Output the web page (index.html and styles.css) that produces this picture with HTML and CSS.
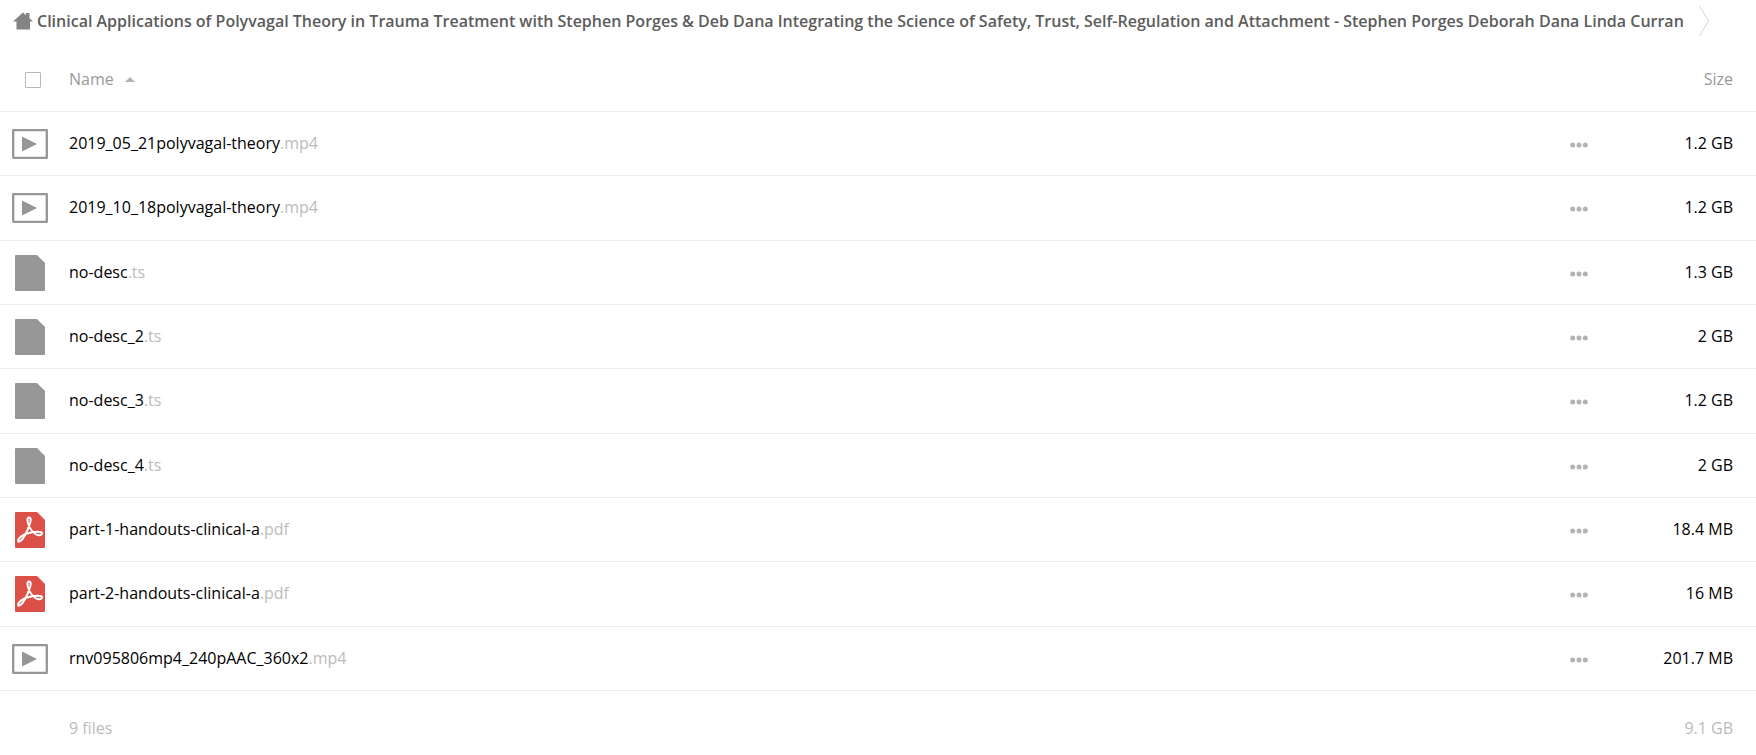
FILE: index.html
```html
<!DOCTYPE html>
<html lang="en">
<head>
<meta charset="utf-8">
<title>Files</title>
<link rel="stylesheet" href="styles.css">
</head>
<body>
<svg class="sprite" aria-hidden="true">
  <symbol id="video" viewBox="0 0 36 30">
    <path d="M1.200 1.200h33.600v27.600H1.200z" fill="#fff" stroke="#969696" stroke-width="2.300" stroke-linejoin="round"/>
    <path d="M10 7.500l15 7.500-15 7.500z" fill="#969696"/>
  </symbol>
  <symbol id="file" viewBox="0 0 30 36">
    <path d="M1 0h21l8 8v27a1 1 0 0 1-1 1H1a1 1 0 0 1-1-1V1a1 1 0 0 1 1-1z" fill="#969696"/>
  </symbol>
  <symbol id="pdf" viewBox="0 0 30 36">
    <path d="M1 0h21l8 8v27a1 1 0 0 1-1 1H1a1 1 0 0 1-1-1V1a1 1 0 0 1 1-1z" fill="#dd5047"/>
    <path d="M14 5.500C12 5.500 12 9 13.600 13C15.200 17 18 20.500 21 22.300C24 24 27.300 23 27 21C26.600 19.300 20 19.500 16 20.500C11 21.600 6 24 4 26.500C2.500 28.500 3 30 4.500 29.600C7.500 28.500 10.500 22.500 12.500 18C14.200 14 15.700 10.500 15.700 8C15.700 6.300 15 5.500 14 5.500z" fill="none" stroke="#fff" stroke-width="2" stroke-linejoin="round"/>
  </symbol>
  <symbol id="dots" viewBox="0 0 18 6">
    <circle cx="2.700" cy="3" r="2.500"/><circle cx="9" cy="3" r="2.500"/><circle cx="15.300" cy="3" r="2.500"/>
  </symbol>
</svg>

<nav class="breadcrumb" aria-label="Breadcrumb">
  <a class="crumb" href="#">
    <svg class="home" viewBox="0 0 20 18" aria-hidden="true"><path d="M10 0.500l3 2.700V1h3.500v5.200L20 9.500h-3V17.500H3.500V9.500H0z" fill="#848484"/></svg>
    <span>Clinical Applications of Polyvagal Theory in Trauma Treatment with Stephen Porges &amp; Deb Dana Integrating the Science of Safety, Trust, Self-Regulation and Attachment - Stephen Porges Deborah Dana Linda Curran</span>
  </a>
  <svg class="separator" viewBox="0 0 10 30" aria-hidden="true"><path d="M0.500 0l9 15-9 15" fill="none" stroke="#d5d5d5"/></svg>
</nav>

<table class="files">
  <thead>
    <tr>
      <th class="select"><input class="check" type="checkbox" aria-label="Select all"></th>
      <th class="name"><button class="sort" type="button">Name <svg class="arrow" viewBox="0 0 10 5" aria-hidden="true"><path d="M0 5l5-5 5 5z" fill="#b3b3b3"/></svg></button></th>
      <th class="actions"></th>
      <th class="size"><button class="sort" type="button">Size</button></th>
    </tr>
  </thead>
  <tbody>
    <tr><td class="select"><svg class="icon-video"><use href="#video"/></svg></td><td class="name"><a href="#">2019_05_21polyvagal-theory<span class="ext">.mp4</span></a></td><td class="actions"><button class="more" type="button" aria-label="More actions"><svg class="dots"><use href="#dots"/></svg></button></td><td class="size">1.2 GB</td></tr>
    <tr><td class="select"><svg class="icon-video"><use href="#video"/></svg></td><td class="name"><a href="#">2019_10_18polyvagal-theory<span class="ext">.mp4</span></a></td><td class="actions"><button class="more" type="button" aria-label="More actions"><svg class="dots"><use href="#dots"/></svg></button></td><td class="size">1.2 GB</td></tr>
    <tr><td class="select"><svg class="icon-file"><use href="#file"/></svg></td><td class="name"><a href="#">no-desc<span class="ext">.ts</span></a></td><td class="actions"><button class="more" type="button" aria-label="More actions"><svg class="dots"><use href="#dots"/></svg></button></td><td class="size">1.3 GB</td></tr>
    <tr><td class="select"><svg class="icon-file"><use href="#file"/></svg></td><td class="name"><a href="#">no-desc_2<span class="ext">.ts</span></a></td><td class="actions"><button class="more" type="button" aria-label="More actions"><svg class="dots"><use href="#dots"/></svg></button></td><td class="size">2 GB</td></tr>
    <tr><td class="select"><svg class="icon-file"><use href="#file"/></svg></td><td class="name"><a href="#">no-desc_3<span class="ext">.ts</span></a></td><td class="actions"><button class="more" type="button" aria-label="More actions"><svg class="dots"><use href="#dots"/></svg></button></td><td class="size">1.2 GB</td></tr>
    <tr><td class="select"><svg class="icon-file"><use href="#file"/></svg></td><td class="name"><a href="#">no-desc_4<span class="ext">.ts</span></a></td><td class="actions"><button class="more" type="button" aria-label="More actions"><svg class="dots"><use href="#dots"/></svg></button></td><td class="size">2 GB</td></tr>
    <tr><td class="select"><svg class="icon-file"><use href="#pdf"/></svg></td><td class="name"><a href="#">part-1-handouts-clinical-a<span class="ext">.pdf</span></a></td><td class="actions"><button class="more" type="button" aria-label="More actions"><svg class="dots"><use href="#dots"/></svg></button></td><td class="size">18.4 MB</td></tr>
    <tr><td class="select"><svg class="icon-file"><use href="#pdf"/></svg></td><td class="name"><a href="#">part-2-handouts-clinical-a<span class="ext">.pdf</span></a></td><td class="actions"><button class="more" type="button" aria-label="More actions"><svg class="dots"><use href="#dots"/></svg></button></td><td class="size">16 MB</td></tr>
    <tr><td class="select"><svg class="icon-video"><use href="#video"/></svg></td><td class="name"><a href="#">rnv095806mp4_240pAAC_360x2<span class="ext">.mp4</span></a></td><td class="actions"><button class="more" type="button" aria-label="More actions"><svg class="dots"><use href="#dots"/></svg></button></td><td class="size">201.7 MB</td></tr>
  </tbody>
  <tfoot>
    <tr><td class="select"></td><td class="name">9 files</td><td class="actions"></td><td class="size">9.1 GB</td></tr>
  </tfoot>
</table>
</body>
</html>
```

FILE: styles.css
```css
* {
  box-sizing: border-box;
}

body {
  margin: 0;
  background: #fff;
  color: #000;
  font-family: "Open Sans", "Noto Sans", sans-serif;
  font-size: 16px;
  line-height: 22px;
}

a {
  color: inherit;
  text-decoration: none;
}

button {
  padding: 0;
  border: 0;
  background: none;
  color: inherit;
  font: inherit;
  cursor: pointer;
}

.sprite {
  position: absolute;
  width: 0;
  height: 0;
}

.breadcrumb {
  display: flex;
  align-items: center;
  gap: 15px;
  height: 42px;
  padding-left: 13px;
  color: #5c5c5c;
  font-weight: 600;
  white-space: nowrap;
}

.crumb {
  display: flex;
  align-items: center;
  gap: 4px;
}

.home {
  width: 20px;
  height: 18px;
}

.separator {
  width: 10px;
  height: 30px;
}

.files {
  width: 100%;
  border-collapse: separate;
  border-spacing: 0;
  table-layout: fixed;
}

.files th,
.files td {
  padding: 0;
  text-align: left;
  font-weight: 400;
  vertical-align: middle;
}

.files thead th {
  height: 70px;
  padding-top: 5px;
  border-bottom: 1px solid #ebebeb;
  color: #999;
}

.files tbody td {
  height: 64px;
  border-bottom: 1px solid #ebebeb;
}

.files tbody tr:nth-child(3n + 2) td {
  height: 65px;
}

.files tbody .name,
.files tbody .size {
  padding-bottom: 2px;
}

.files tfoot td {
  height: 74px;
  color: #bbb;
}

.files .select {
  width: 69px;
}

.files tbody .select {
  padding-left: 12px;
}

.files thead .select {
  padding-left: 25px;
}

.files .actions {
  width: 100px;
}

.files .size {
  width: 95px;
  padding-right: 23px;
  text-align: right;
  white-space: nowrap;
}

.ext {
  color: #bbb;
}

.check {
  display: block;
  width: 16px;
  height: 16px;
  margin: 2px 0 0;
  border: 1px solid #b8b8b8;
  border-radius: 1px;
  appearance: none;
  background: #fff;
}

.arrow {
  width: 10px;
  height: 5px;
  margin-left: 7px;
  vertical-align: 3px;
}

.icon-video {
  display: block;
  width: 36px;
  height: 30px;
}

.icon-file {
  display: block;
  width: 30px;
  height: 36px;
  margin-left: 3px;
}

.more {
  display: block;
  margin-left: 9px;
  padding: 8px 0 6px;
}

.files tbody .actions {
  padding-right: 1px;
}

.dots {
  display: block;
  width: 18px;
  height: 6px;
  fill: #b3b3b3;
}
```
